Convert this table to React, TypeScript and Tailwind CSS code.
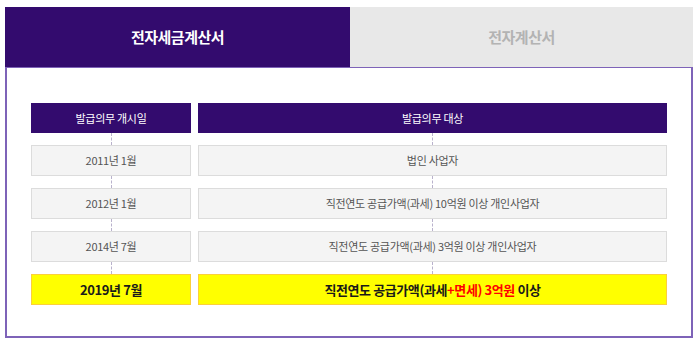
const font = { fontFamily: '"Noto Sans CJK KR", "Noto Sans", sans-serif' }

type Row = { date: string; target: string }

const rows: Row[] = [
  { date: "2011년 1월", target: "법인 사업자" },
  { date: "2012년 1월", target: "직전연도 공급가액(과세) 10억원 이상 개인사업자" },
  { date: "2014년 7월", target: "직전연도 공급가액(과세) 3억원 이상 개인사업자" },
]

const Connector = ({ h }: { h: string }) => (
  <div className={`flex gap-[7px] ${h}`}>
    <div className="w-[160px] flex justify-center">
      <div className="h-full border-l border-dashed border-[#b9b2cc]" />
    </div>
    <div className="flex-1 flex justify-center">
      <div className="h-full border-l border-dashed border-[#b9b2cc]" />
    </div>
  </div>
)

export default function App() {
  return (
    <div className="w-[700px] h-[342px] bg-white pt-[7px] pl-[5px]" style={font}>
      <div className="w-[688px]">
        <div className="flex h-[60px]">
          <div className="w-[345px] bg-[#330b6e] flex items-center justify-center text-white text-[15px] font-bold tracking-[-0.5px]">
            전자세금계산서
          </div>
          <div className="flex-1 bg-[#e8e8e8] flex items-center justify-center text-[#b3b3b3] text-[15px] font-bold tracking-[-0.5px]">
            전자계산서
          </div>
        </div>
        <div className="h-[271px] border-2 border-t border-[#7e63b8] px-[24px] pt-[35px]">
          <div className="flex gap-[7px] h-[30px] text-white text-[11px] tracking-[-0.3px]">
            <div className="w-[160px] bg-[#330b6e] flex items-center justify-center">발급의무 개시일</div>
            <div className="flex-1 bg-[#330b6e] flex items-center justify-center">발급의무 대상</div>
          </div>
          <Connector h="h-[12px]" />
          {rows.map((r) => (
            <div key={r.date}>
              <div className="flex gap-[7px] h-[31px] text-[#555] text-[11px] tracking-[-0.3px]">
                <div className="w-[160px] bg-[#f4f4f4] border border-[#dcdcdc] flex items-center justify-center">
                  {r.date}
                </div>
                <div className="flex-1 bg-[#f4f4f4] border border-[#dcdcdc] flex items-center justify-center">
                  {r.target}
                </div>
              </div>
              <Connector h="h-[12px]" />
            </div>
          ))}
          <div className="flex gap-[7px] h-[31px] text-[#1a1a1a] text-[13px] font-bold tracking-[-0.4px]">
            <div className="w-[160px] bg-[#ffff00] border border-[#fbcf3c] flex items-center justify-center">
              2019년 7월
            </div>
            <div className="flex-1 bg-[#ffff00] border border-[#fbcf3c] flex items-center justify-center">
              직전연도 공급가액(과세<span className="text-[#ff0000]">+면세) 3억원</span>&nbsp;이상
            </div>
          </div>
        </div>
      </div>
    </div>
  )
}
